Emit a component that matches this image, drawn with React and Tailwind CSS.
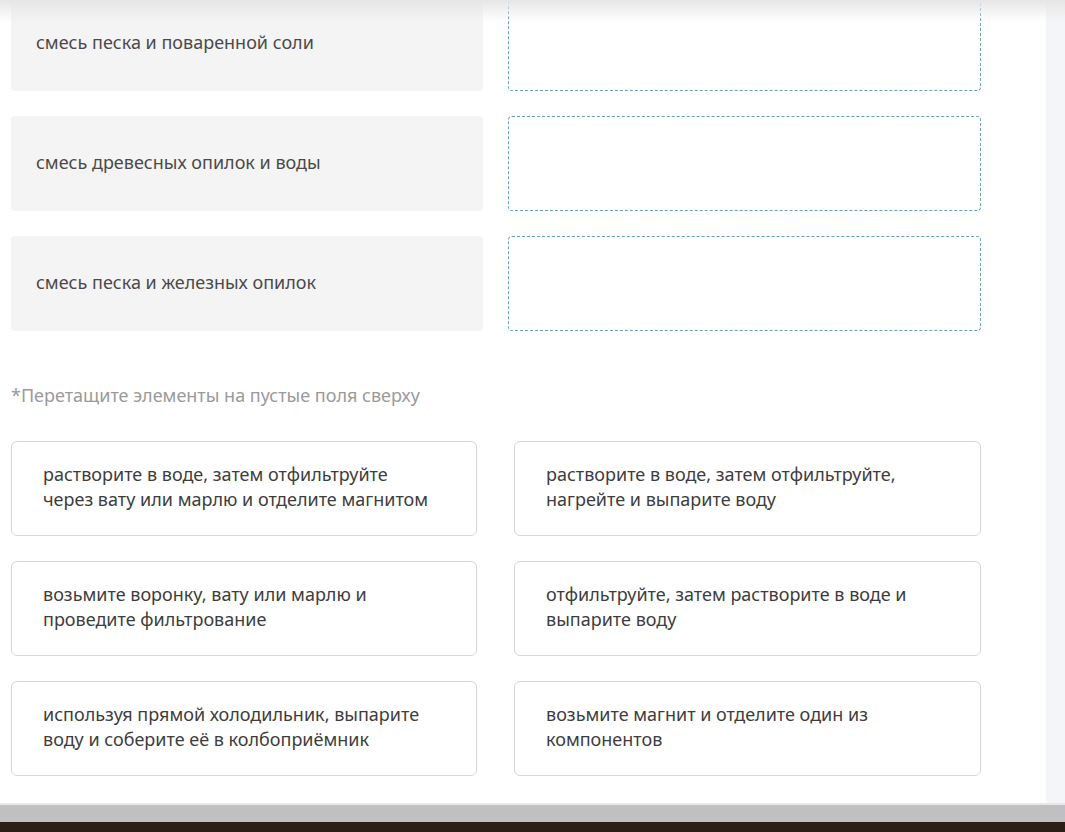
import React from 'react';

const sources = [
  'смесь песка и поваренной соли',
  'смесь древесных опилок и воды',
  'смесь песка и железных опилок',
];

const options = [
  ['растворите в воде, затем отфильтруйте', 'через вату или марлю и отделите магнитом'],
  ['растворите в воде, затем отфильтруйте,', 'нагрейте и выпарите воду'],
  ['возьмите воронку, вату или марлю и', 'проведите фильтрование'],
  ['отфильтруйте, затем растворите в воде и', 'выпарите воду'],
  ['используя прямой холодильник, выпарите', 'воду и соберите её в колбоприёмник'],
  ['возьмите магнит и отделите один из', 'компонентов'],
];

function App() {
  return (
    <div className="h-[832px] w-[1065px] overflow-hidden flex flex-col font-['Noto_Sans',sans-serif]">
      <div className="relative flex flex-1 min-h-0">
        <div className="w-[1046px] bg-white flex flex-col px-[11px] -mt-[4px]">
          <div className="flex flex-col gap-[25px] w-[970px]">
            {sources.map((s) => (
              <div key={s} className="flex gap-[25px]">
                <div className="w-[472px] h-[95px] rounded-[4px] bg-[#f4f4f4] flex items-center pl-[25px] pb-[2px] text-[18px] text-[#4a4a4a]">
                  {s}
                </div>
                <div className="w-[473px] h-[95px] rounded-[4px] border border-dashed border-[#6b9dbf] bg-white" />
              </div>
            ))}
          </div>
          <p className="mt-[52px] text-[18px] text-[#9a9a9a] leading-[24px]">*Перетащите элементы на пустые поля сверху</p>
          <div className="mt-[34px] grid grid-cols-[466px_467px] gap-x-[37px] gap-y-[25px]">
            {options.map((o) => (
              <div key={o[0]} className="h-[95px] rounded-[6px] border border-[#d6d6d6] bg-white flex flex-col justify-center pl-[31px] pb-[4px] text-[18px] leading-[25px] text-[#3d3d3d]">
                <span>{o[0]}</span>
                <span>{o[1]}</span>
              </div>
            ))}
          </div>
        </div>
        <div className="flex-1 bg-[#f4f5f8]" />
        <div className="absolute inset-x-0 top-0 h-[22px] bg-gradient-to-b from-[#e6e6e6] to-transparent pointer-events-none" />
      </div>
      <div className="h-[19px] bg-[#c0c0c0] border-t-2 border-[#e8e8e8]" />
      <div className="h-[10px] bg-[#2b1e17]" />
    </div>
  );
}

export default App;
